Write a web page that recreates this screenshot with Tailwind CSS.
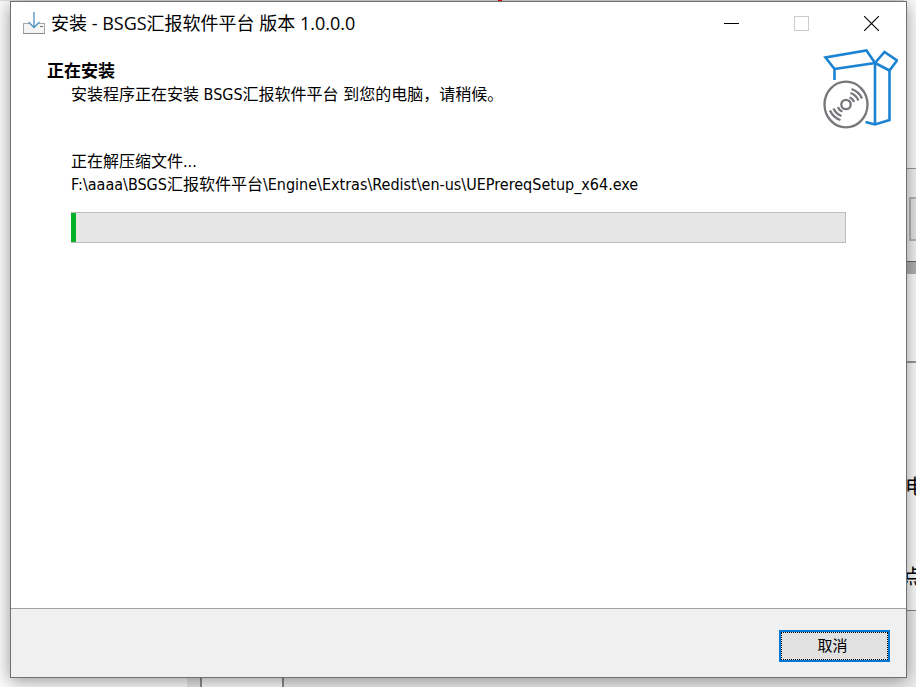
<!DOCTYPE html>
<html lang="zh-CN">
<head>
<meta charset="utf-8">
<meta name="viewport" content="width=device-width, initial-scale=1">
<title>安装 - BSGS汇报软件平台 版本 1.0.0.0</title>
<script src="https://cdn.jsdelivr.net/npm/@tailwindcss/browser@4"></script>
</head>
<body class="relative isolate flex min-h-screen flex-col overflow-hidden bg-[#fbfbfb] font-['DejaVu_Sans_Condensed','Noto_Sans_CJK_SC',sans-serif] text-black">

<!-- Windows behind the installer -->
<div class="absolute inset-0 -z-10 overflow-hidden" aria-hidden="true">
  <div class="absolute top-0 left-0 h-px w-full bg-[#dcdcdc]"></div>
  <div class="absolute top-0 left-[498px] h-px w-1 bg-red-600"></div>
  <div class="absolute right-0 bottom-0 left-0 flex h-[10px]">
    <div class="w-[187px] bg-[#fbfbfb]"></div>
    <div class="w-[13px] bg-[#e6e6e6]"></div>
    <div class="w-[84px] border-x-2 border-[#8c8c8c] bg-[#fbfbfb]"></div>
    <div class="flex-1 bg-[#ededed]"></div>
  </div>
  <div class="absolute top-0 right-0 bottom-0 flex w-3 flex-col">
    <div class="h-[168px] bg-[#fbfbfb]"></div>
    <div class="flex h-[94px] flex-col items-end border-t border-b border-t-[#999] border-b-[#666] bg-[#f0f0f0] pt-[28px]">
      <div class="h-[44px] w-[7px] border-2 border-r-0 border-[#b5b5b5] bg-[#e3e3e3]"></div>
    </div>
    <div class="h-3 bg-[#b0b0b0]"></div>
    <div class="h-[89px] border-b-2 border-[#999] bg-[#fbfbfb]"></div>
    <div class="h-[248px] border-b border-[#888] bg-[#fbfbfb]"></div>
    <div class="flex-1 bg-[#ededed]"></div>
  </div>
  <span class="absolute top-[475px] left-[905px] text-xl leading-6">电</span>
  <span class="absolute top-[565px] left-[903px] text-xl leading-6">点</span>
</div>

<main class="mx-[10px] mt-px mr-[9px] mb-[9px] flex flex-1 flex-col border border-[#707070] bg-white shadow-[0_3px_16px_rgba(0,0,0,0.4)]">
  <header class="flex h-[43px] items-center pl-3">
    <svg class="mr-[6px] h-6 w-[22px] shrink-0" viewBox="0 0 22 24" fill="none" aria-hidden="true">
      <rect x="0.5" y="11.5" width="21" height="10" fill="#f5f5f5" stroke="#a5a5a5"/>
      <path d="M0 21.5h22" stroke="#8c8c8c"/>
      <path d="M17 14.5h3" stroke="#777"/>
      <path d="M5 10.5h12l-6 6z" fill="#fff"/>
      <path d="M11 0v15M5.5 10l5.500 5.500L16.500 10" stroke="#4c91bd" stroke-width="1.300"/>
    </svg>
    <h1 class="flex-1 pb-0.5 font-['Open_Sans','Noto_Sans_CJK_SC',sans-serif] text-lg leading-6">安装 - BSGS汇报软件平台 版本 1.0.0.0</h1>
    <div class="flex self-stretch">
      <button type="button" aria-label="最小化" class="flex w-[69px] items-center justify-center">
        <svg class="size-[15px]" viewBox="0 0 15 15" stroke="#000" aria-hidden="true"><path d="M0 7.500h15"/></svg>
      </button>
      <button type="button" aria-label="最大化" disabled class="flex w-[70px] items-center justify-center">
        <svg class="size-[15px]" viewBox="0 0 15 15" fill="none" stroke="#ccc" aria-hidden="true"><rect x="0.500" y="0.500" width="14" height="14"/></svg>
      </button>
      <button type="button" aria-label="关闭" class="flex w-[70px] items-center justify-center">
        <svg class="size-[15px]" viewBox="0 0 15 15" stroke="#000" stroke-width="1.100" aria-hidden="true"><path d="M0 0l15 15M15 0L0 15"/></svg>
      </button>
    </div>
  </header>

  <section class="flex justify-between pr-2 pl-9">
    <div class="pt-[14px]">
      <h2 class="text-[17px] leading-6 font-bold">正在安装</h2>
      <p class="pl-6 text-base leading-[23px]">安装程序正在安装 BSGS汇报软件平台 到您的电脑，请稍候。</p>
    </div>
    <svg class="mt-[3px] h-[81px] w-[76px] shrink-0" viewBox="822 48 76 81" fill="none" aria-hidden="true">
      <g stroke="#1c82d2" stroke-width="2.600">
        <path d="M834.500 80V69L825.500 57.500L866.500 50.500L875 63L834.500 69"/>
        <path d="M875 63l9.500-11L897 60.500L889.500 70.500z"/>
        <path d="M875 63v61.500M889.500 70.500V120L875 124.500L865.500 122"/>
      </g>
      <g stroke="#77777c" stroke-width="2.300">
        <ellipse cx="846" cy="104.500" rx="21.500" ry="22.800"/>
        <circle cx="846" cy="104.500" r="4.700"/>
        <path d="M849.500 97.500Q853 98.500 854 102M850.500 93Q856 95 858.500 100.500M851.500 89Q859 91.500 862 98.500"/>
        <path d="M842.500 111.500Q839 110.500 838 107M841.500 116Q836 114 833.500 108.500M840.500 120Q833 117.500 830 110.500"/>
      </g>
    </svg>
  </section>

  <section class="flex-1 px-[60px] pt-[21px]">
    <p class="text-base leading-[23px]">正在解压缩文件...</p>
    <p class="text-base leading-[23px]">F:\aaaa\BSGS汇报软件平台\Engine\Extras\Redist\en-us\UEPrereqSetup_x64.exe</p>
    <div role="progressbar" aria-label="安装进度" aria-valuenow="1" aria-valuemin="0" aria-valuemax="100" class="mt-4 h-[31px] border border-l-0 border-[#bcbcbc] bg-[#e6e6e6]">
      <div class="h-full w-[5px] bg-[#06b025]"></div>
    </div>
  </section>

  <footer class="flex h-[69px] items-start justify-end border-t border-[#a0a0a0] bg-[#f0f0f0] pt-[21px] pr-4">
    <button type="button" class="h-8 w-[111px] border-2 border-[#0078d7] bg-[#e1e1e1] pr-1 text-[15px] leading-6 outline-1 -outline-offset-3 outline-black outline-dotted">取消</button>
  </footer>
</main>
</body>
</html>
